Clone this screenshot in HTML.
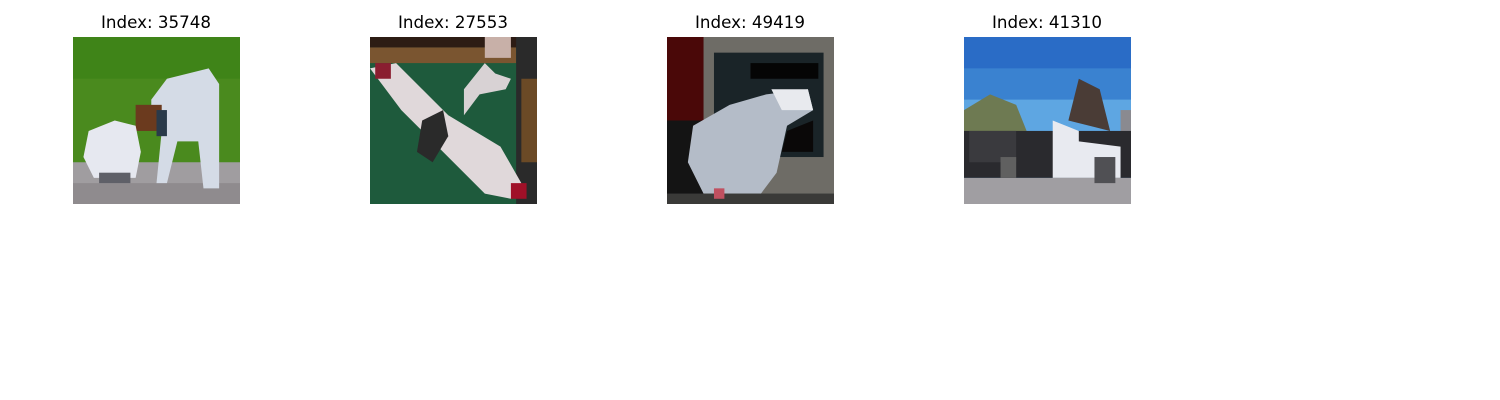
<!DOCTYPE html>
<html><head><style>
body{margin:0;width:1500px;height:400px;background:#fff;position:relative;overflow:hidden;font-family:"DejaVu Sans","Liberation Sans",sans-serif}
.t{position:absolute;top:12px;width:200px;text-align:center;font-size:16.7px;color:#000}
svg{position:absolute;top:37px;width:167px;height:167px}
</style></head><body>
<div class="t" style="left:56px">Index: 35748</div>
<div class="t" style="left:353px">Index: 27553</div>
<div class="t" style="left:650px">Index: 49419</div>
<div class="t" style="left:947px">Index: 41310</div>

<svg style="left:73px" viewBox="0 0 32 32" preserveAspectRatio="none">
<rect width="32" height="32" fill="#4a8a1e"/>
<rect y="0" width="32" height="8" fill="#3f8418"/>
<rect y="24" width="32" height="8" fill="#a09da0"/>
<rect y="28" width="32" height="4" fill="#8f8b8e"/>
<polygon points="15,12 18,8 26,6 28,9 28,29 25,29 24,20 20,20 18,28 16,28 17,18 15,16" fill="#d4dbe6"/>
<rect x="12" y="13" width="5" height="5" fill="#6b3a1e"/>
<rect x="16" y="14" width="2" height="5" fill="#2a3a4a"/>
<polygon points="3,18 8,16 12,17 13,22 12,27 4,27 2,23" fill="#e6e8f0"/>
<rect x="5" y="26" width="6" height="2" fill="#5f6068"/>
</svg>

<svg style="left:370px" viewBox="0 0 32 32" preserveAspectRatio="none">
<rect width="32" height="32" fill="#1e5a3c"/>
<rect width="32" height="2" fill="#2d1c14"/>
<rect y="2" width="28" height="3" fill="#7a5530"/>
<rect x="28" y="0" width="4" height="32" fill="#2a2a2a"/>
<rect x="29" y="8" width="3" height="16" fill="#6b4a26"/>
<rect x="22" y="0" width="5" height="4" fill="#c8b0a8"/>
<polygon points="0,6 5,5 15,15 25,21 29,28 27,31 22,30 14,22 6,14" fill="#e0d8da"/>
<polygon points="18,10 22,5 24,7 27,8 26,10 21,11 18,15" fill="#d8d2d4"/>
<polygon points="10,16 14,14 15,19 12,24 9,22" fill="#2a2a2a"/>
<rect x="1" y="5" width="3" height="3" fill="#8a1e30"/>
<rect x="27" y="28" width="3" height="3" fill="#a01028"/>
</svg>

<svg style="left:667px" viewBox="0 0 32 32" preserveAspectRatio="none">
<rect width="32" height="32" fill="#6e6c66"/>
<rect width="7" height="16" fill="#4a0808"/>
<rect y="16" width="7" height="16" fill="#141414"/>
<rect x="9" y="3" width="21" height="20" fill="#1a2428"/>
<rect x="16" y="5" width="13" height="3" fill="#050505"/>
<polygon points="5,17 12,13 19,11 27,10 28,14 23,17 21,26 18,30 7,30 4,24" fill="#b4bcc8"/>
<polygon points="20,10 27,10 28,14 22,14" fill="#e8eaee"/>
<polygon points="23,18 28,16 28,22 22,22" fill="#0a0808"/>
<rect y="30" width="32" height="2" fill="#3a3a38"/>
<rect x="9" y="29" width="2" height="2" fill="#c05060"/>
</svg>

<svg style="left:964px" viewBox="0 0 32 32" preserveAspectRatio="none">
<rect width="32" height="32" fill="#3a82d0"/>
<rect width="32" height="6" fill="#2a6cc6"/>
<rect y="12" width="32" height="8" fill="#5ea6e2"/>
<polygon points="0,14 5,11 10,13 12,18 0,18" fill="#6e7a52"/>
<polygon points="20,16 22,8 26,10 28,18" fill="#4a3c36"/>
<rect x="30" y="14" width="2" height="10" fill="#8a8a90"/>
<rect y="18" width="32" height="9" fill="#2a2a2e"/>
<rect x="1" y="18" width="9" height="6" fill="#3a3a3e"/>
<polygon points="17,16 22,18 22,20 30,21 30,27 17,27" fill="#e8eaf0"/>
<rect y="27" width="32" height="5" fill="#a09ea2"/>
<rect x="7" y="23" width="3" height="4" fill="#606060"/>
<rect x="25" y="23" width="4" height="5" fill="#505054"/>
</svg>
</body></html>
